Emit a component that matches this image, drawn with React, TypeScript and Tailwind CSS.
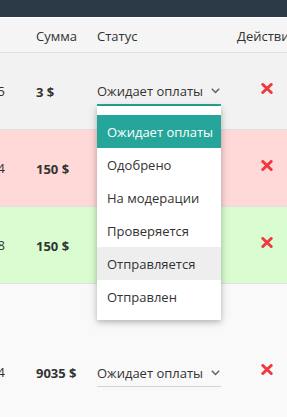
import React from "react";

const Chevron = () => (
  <svg width="9" height="6" viewBox="0 0 9 6" className="shrink-0">
    <polyline points="0.8,0.8 4.5,4.6 8.2,0.8" fill="none" stroke="#5a5f66" strokeWidth="1.4" />
  </svg>
);

const XIcon = () => (
  <svg width="12" height="11" viewBox="0 0 12 11">
    <path d="M1.8 1.5 L10.2 9.5 M10.2 1.5 L1.8 9.5" stroke="#f0393f" strokeWidth="3" strokeLinecap="round" />
  </svg>
);

type Row = { id: string; sum: string; bg: string; h: string; open?: boolean };

const options = ["Ожидает оплаты", "Одобрено", "На модерации", "Проверяется", "Отправляется", "Отправлен"];

function Select({ open }: { open?: boolean }) {
  return (
    <div className="relative w-[124px]">
      <div
        className={
          "flex h-[28px] items-center justify-between pr-[1px] " +
          (open ? "border-b-2 border-[#26a69a]" : "border-b border-[#d4d4d4]")
        }
      >
        <span className="whitespace-nowrap">Ожидает оплаты</span>
        <Chevron />
      </div>
      {open && (
        <div className="absolute left-0 top-full z-10 w-[124px] bg-white pt-[9px] pb-[7px] shadow-[0_2px_5px_0_rgba(0,0,0,0.18),0_2px_10px_0_rgba(0,0,0,0.14)]">
          {options.map((o, i) => (
            <div
              key={o}
              className={
                "flex h-[33px] items-center px-[10px] whitespace-nowrap " +
                (i === 0 ? "bg-[#26a69a] text-white" : i === 4 ? "bg-[#eeeeee] text-[#333]" : "text-[#333]")
              }
            >
              {o}
            </div>
          ))}
        </div>
      )}
    </div>
  );
}

export default function App() {
  const rows: Row[] = [
    { id: "15", sum: "3 $", bg: "bg-[#f2f2f2]", h: "h-[77px]", open: true },
    { id: "14", sum: "150 $", bg: "bg-[#ffd8d8]", h: "h-[77px]" },
    { id: "18", sum: "150 $", bg: "bg-[#d9fdd1]", h: "h-[77px]" },
    { id: "14", sum: "9035 $", bg: "bg-[#f9f9f9]", h: "h-[177px]" },
  ];
  return (
    <div
      className="w-[287px] h-[417px] overflow-hidden bg-[#f9f9f9] text-[13px] leading-[20px] text-[#333]"
      style={{ fontFamily: '"Open Sans", "Noto Sans", sans-serif' }}
    >
      <div className="h-[17px] bg-[#2c3a47] border-b border-white box-content" />
      <div className="grid h-[35px] grid-cols-[36px_61px_140px_1fr] items-center border-b border-[#e0e0e0] bg-[#f5f5f5] pt-[2px]">
        <div />
        <div>Сумма</div>
        <div>Статус</div>
        <div className="whitespace-nowrap">Действия</div>
      </div>
      {rows.map((r, i) => (
        <div
          key={i}
          className={"grid grid-cols-[36px_61px_140px_1fr] items-center border-b border-[#e2dede] " + r.bg + " " + r.h + (r.open ? " relative z-10" : "")}
        >
          <div className="flex">
            <div className="flex w-[5px] justify-end overflow-hidden">{r.id}</div>
          </div>
          <div className="font-bold pt-[1px]">{r.sum}</div>
          <div className="pt-[2px]">
            <Select open={r.open} />
          </div>
          <div className="pl-[24px] pb-[6px]">
            <XIcon />
          </div>
        </div>
      ))}
    </div>
  );
}
